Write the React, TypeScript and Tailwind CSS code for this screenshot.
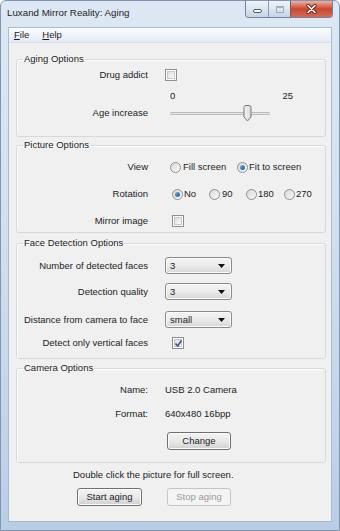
import React from 'react';

const Checkbox: React.FC<{ checked?: boolean }> = ({ checked }) => (
  <span className="relative w-[12px] h-[12px] border border-[#8e8f8f] bg-white p-[1px] flex">
    <span className="flex-1 border border-[#c6c6c6] bg-gradient-to-br from-[#dcdcdc] to-[#fbfbfb]" />
    {checked && (
      <svg className="absolute left-[1px] top-[1px]" width="9" height="9" viewBox="0 0 9 9">
        <path d="M1.5 4.5 L3.6 7 L7.5 1.5" fill="none" stroke="#3c4f8c" strokeWidth="1.6" />
      </svg>
    )}
  </span>
);

const Radio: React.FC<{ checked?: boolean }> = ({ checked }) => (
  <span className="w-[11px] h-[11px] rounded-full border border-[#8e8f8f] bg-gradient-to-br from-[#d8d8d8] to-[#fbfbfb] flex items-center justify-center">
    {checked && <span className="w-[5px] h-[5px] rounded-full bg-gradient-to-br from-[#6fb2de] to-[#1b5a8e]" />}
  </span>
);

const Combo: React.FC<{ value: string }> = ({ value }) => (
  <div className="w-[67px] h-[17px] rounded-[3px] border border-[#8b8b8b] bg-gradient-to-b from-[#f4f4f4] via-[#ebebeb] to-[#d6d6d6] shadow-[inset_0_0_0_1px_#fbfbfb] flex items-center justify-between pl-[4px] pr-[6px]">
    <span>{value}</span>
    <svg width="7" height="4" viewBox="0 0 7 4">
      <path d="M0 0 H7 L3.5 4 Z" fill="#111" />
    </svg>
  </div>
);

const Button: React.FC<{ label: string; disabled?: boolean; className?: string }> = ({ label, disabled, className }) => (
  <div
    className={`h-[18px] rounded-[3px] border flex items-center justify-center ${
      disabled
        ? 'border-[#c2c6c9] bg-[#f4f4f4] text-[#9a9a9a]'
        : 'border-[#707070] bg-gradient-to-b from-[#f3f3f3] via-[#e9e9e9] to-[#d0d0d0] shadow-[inset_0_0_0_1px_#fcfcfc]'
    } ${className ?? ''}`}
  >
    {label}
  </div>
);

const Group: React.FC<{ title: string; className?: string; children: React.ReactNode }> = ({ title, className, children }) => (
  <fieldset className={`w-[310px] ml-[7px] border border-[#d3dade] rounded-[3px] shadow-[inset_1px_1px_0_#fff] ${className ?? ''}`}>
    <legend className="ml-[6px] px-[1px] leading-[12px]">{title}</legend>
    {children}
  </fieldset>
);

const Label: React.FC<{ children: React.ReactNode }> = ({ children }) => (
  <span className="w-[131px] text-right shrink-0">{children}</span>
);

export default function App() {
  return (
    <div
      className="w-[340px] h-[531px] flex flex-col bg-gradient-to-b from-[#dde8f4] via-[#cfdeee] to-[#b8cee7] border border-[#8196ae] rounded-t-[6px] text-[9.5px] leading-[12px] text-[#1c1c1c]"
      style={{ fontFamily: '"Liberation Sans", Arial, sans-serif' }}
    >
      {/* Title bar */}
      <div className="h-[26px] flex justify-between shrink-0">
        <span className="pl-[6px] pt-[6px] text-[9.75px] text-[#1e1e1e]">Luxand Mirror Reality: Aging</span>
        <div className="flex h-[17px] mr-[6px] rounded-b-[4px] overflow-hidden border border-t-0 border-[#6f839c]">
          <div className="w-[23px] bg-gradient-to-b from-[#eef3f8] via-[#dbe5f0] to-[#c4d3e4] border-r border-[#8a9cb3] flex items-center justify-center">
            <span className="w-[9px] h-[4px] mt-[3px] rounded-[2px] border border-[#4e5b6c] bg-white" />
          </div>
          <div className="w-[22px] bg-gradient-to-b from-[#eef3f8] via-[#dbe5f0] to-[#c4d3e4] border-r border-[#7d5a55] flex items-center justify-center">
            <span className="w-[8px] h-[7px] border border-[#7e8a98] border-t-2 bg-transparent opacity-60" />
          </div>
          <div className="w-[41px] bg-gradient-to-b from-[#eab1a3] via-[#c9462f] to-[#d36a52] flex items-center justify-center">
            <svg width="11" height="10" viewBox="0 0 11 10">
              <path d="M2 1.5 L9 8.5 M9 1.5 L2 8.5" stroke="#5a2118" strokeWidth="3.2" strokeLinecap="round" />
              <path d="M2 1.5 L9 8.5 M9 1.5 L2 8.5" stroke="#ffffff" strokeWidth="1.6" strokeLinecap="round" />
            </svg>
          </div>
        </div>
      </div>

      {/* Client area */}
      <div className="flex-1 mx-[7px] mb-[8px] bg-[#f0f0f0] border border-[#a9bbcf] flex flex-col">
        {/* Menu */}
        <div className="h-[15px] flex items-center gap-[13px] pl-[5px] bg-gradient-to-b from-[#fbfcfe] to-[#e4ebf4] border-b border-[#d5dee9] shrink-0">
          <span>
            <span className="underline">F</span>ile
          </span>
          <span>
            <span className="underline">H</span>elp
          </span>
        </div>

        {/* Aging Options */}
        <Group title="Aging Options" className="mt-[10px] pb-[14px]">
          <div className="flex items-center h-[14px] mt-[3px]">
            <Label>Drug addict</Label>
            <span className="ml-[17px]">
              <Checkbox />
            </span>
          </div>
          <div className="flex items-center h-[12px] mt-[8px] pl-[153px] w-[276px] justify-between">
            <span>0</span>
            <span>25</span>
          </div>
          <div className="flex items-center h-[18px] mt-[2px]">
            <Label>Age increase</Label>
            <div className="relative ml-[22px] w-[100px] h-[18px] flex items-center">
              <div className="w-full h-[3px] rounded-[1px] border border-[#b9bcbf] bg-[#e6e8ea]" />
              <svg className="absolute left-[73px] top-[1px]" width="9" height="17" viewBox="0 0 9 17">
                <defs>
                  <linearGradient id="thumb" x1="0" y1="0" x2="1" y2="0">
                    <stop offset="0" stopColor="#f7f7f7" />
                    <stop offset="1" stopColor="#dadada" />
                  </linearGradient>
                </defs>
                <path d="M1 2.5 Q1 0.5 3 0.5 H6 Q8 0.5 8 2.5 V12 L4.5 16 L1 12 Z" fill="url(#thumb)" stroke="#777" strokeWidth="1" />
              </svg>
            </div>
          </div>
        </Group>

        {/* Picture Options */}
        <Group title="Picture Options" className="mt-[2px] pb-[3px]">
          <div className="flex items-center h-[16px] mt-[8px]">
            <Label>View</Label>
            <div className="ml-[22px] flex items-center">
              <span className="w-[67px] flex items-center gap-[2px]">
                <Radio />
                <span>Fill screen</span>
              </span>
              <span className="flex items-center gap-[1px]">
                <Radio checked />
                <span>Fit to screen</span>
              </span>
            </div>
          </div>
          <div className="flex items-center h-[16px] mt-[11px]">
            <Label>Rotation</Label>
            <div className="ml-[24px] flex items-center">
              <span className="w-[37px] flex items-center gap-[1px]">
                <Radio checked />
                <span>No</span>
              </span>
              <span className="w-[37px] flex items-center gap-[2px]">
                <Radio />
                <span>90</span>
              </span>
              <span className="w-[38px] flex items-center gap-[1px]">
                <Radio />
                <span>180</span>
              </span>
              <span className="flex items-center gap-[1px]">
                <Radio />
                <span>270</span>
              </span>
            </div>
          </div>
          <div className="flex items-center h-[16px] mt-[11px]">
            <Label>Mirror image</Label>
            <span className="ml-[24px]">
              <Checkbox />
            </span>
          </div>
        </Group>

        {/* Face Detection Options */}
        <Group title="Face Detection Options" className="mt-[4px] pb-[8px]">
          <div className="flex items-center h-[17px] mt-[8px]">
            <Label>Number of detected faces</Label>
            <span className="ml-[17px]">
              <Combo value="3" />
            </span>
          </div>
          <div className="flex items-center h-[17px] mt-[9px]">
            <Label>Detection quality</Label>
            <span className="ml-[17px]">
              <Combo value="3" />
            </span>
          </div>
          <div className="flex items-center h-[17px] mt-[11px]">
            <Label>Distance from camera to face</Label>
            <span className="ml-[17px]">
              <Combo value="small" />
            </span>
          </div>
          <div className="flex items-center h-[14px] mt-[8px]">
            <Label>Detect only vertical faces</Label>
            <span className="ml-[24px]">
              <Checkbox checked />
            </span>
          </div>
        </Group>

        {/* Camera Options */}
        <Group title="Camera Options" className="mt-[3px] pb-[12px]">
          <div className="flex items-center h-[14px] mt-[9px]">
            <Label>Name:</Label>
            <span className="ml-[17px]">USB 2.0 Camera</span>
          </div>
          <div className="flex items-center h-[14px] mt-[10px]">
            <Label>Format:</Label>
            <span className="ml-[17px]">640x480 16bpp</span>
          </div>
          <div className="flex mt-[11px] pl-[150px]">
            <Button label="Change" className="w-[64px]" />
          </div>
        </Group>

        {/* Footer */}
        <div className="h-[12px] mt-[6px] pl-[64px]">Double click the picture for full screen.</div>
        <div className="flex mt-[7px] pl-[68px] gap-[25px]">
          <Button label="Start aging" className="w-[65px]" />
          <Button label="Stop aging" disabled className="w-[64px]" />
        </div>
      </div>
    </div>
  );
}
